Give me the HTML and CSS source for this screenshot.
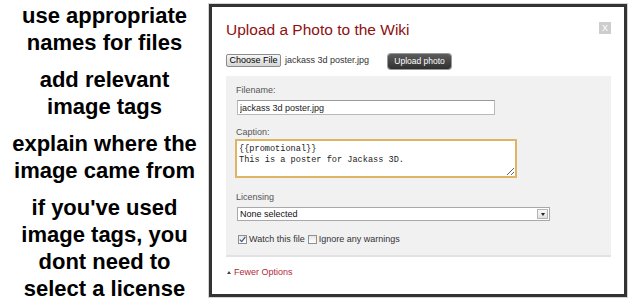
FILE: index.html
```html
<!DOCTYPE html>
<html lang="en">
<head>
    <meta charset="UTF-8">
    <meta name="viewport" content="width=device-width, initial-scale=1.0">
    <title>Upload a Photo to the Wiki</title>
    <link rel="stylesheet" href="styles.css">
</head>
<body>
    <div class="page">
        <div class="tips">
            <p>use appropriate<br>names for files</p>
            <p>add relevant<br>image tags</p>
            <p>explain where the<br>image came from</p>
            <p>if you've used<br>image tags, you<br>dont need to<br>select a license</p>
        </div>
        <div class="dialog">
            <div class="dialog-head">
                <h1 class="title">Upload a Photo to the Wiki</h1>
                <span class="close">X</span>
            </div>
            <div class="file-row">
                <span class="choose">Choose File</span>
                <span class="file-name">jackass 3d poster.jpg</span>
                <span class="upload">Upload photo</span>
            </div>
            <div class="options">
                <label class="label" for="filename">Filename:</label>
                <input class="text-input" id="filename" type="text" value="jackass 3d poster.jpg">
                <label class="label caption-label" for="caption">Caption:</label>
                <textarea class="caption" id="caption">{{promotional}}
This is a poster for Jackass 3D.</textarea>
                <div class="label licensing-label">Licensing</div>
                <div class="select">
                    <span class="select-text">None selected</span>
                    <span class="select-arrow"></span>
                </div>
                <div class="checks">
                    <span class="box checked">
                        <svg width="7" height="7" viewBox="0 0 7 7"><path d="M0.8 3.6 L2.7 5.6 L6.3 0.9" fill="none" stroke="#3b5a8a" stroke-width="1.3"/></svg>
                    </span>
                    <span class="check-text">Watch this file</span>
                    <span class="box"></span>
                    <span class="check-text">Ignore any warnings</span>
                </div>
            </div>
            <div class="fewer"><span class="arrow"></span>Fewer Options</div>
        </div>
    </div>
</body>
</html>
```

FILE: styles.css
```css
body {
    margin: 0;
    background: #fff;
    font-family: "Liberation Sans", Arial, sans-serif;
}
.page {
    display: flex;
    align-items: flex-start;
}
.tips {
    width: 209px;
    flex-shrink: 0;
    display: flex;
    flex-direction: column;
    gap: 10px;
    padding-top: 2px;
    text-align: center;
    font-weight: bold;
    font-size: 22px;
    line-height: 27px;
    color: #000;
}
.tips p {
    margin: 0;
}
.dialog {
    width: 418px;
    height: 293px;
    box-sizing: border-box;
    margin-top: 4px;
    border: 3px solid #333;
    box-shadow: 0 0 0 1px #d4d4d4;
    padding: 14px 13px 0 14px;
    flex-shrink: 0;
}
.dialog-head {
    display: flex;
    justify-content: space-between;
    align-items: flex-start;
}
.title {
    margin: 0;
    font-size: 15.5px;
    font-weight: normal;
    line-height: 18px;
    color: #8e1010;
}
.close {
    width: 12px;
    height: 12px;
    margin-top: 1px;
    background: #cdcdcd;
    color: #fff;
    font-size: 9px;
    line-height: 12px;
    text-align: center;
}
.file-row {
    display: flex;
    align-items: flex-start;
    margin-top: 15px;
    height: 15px;
}
.choose {
    width: 55px;
    height: 13px;
    box-sizing: border-box;
    border: 1px solid #8c8c8c;
    border-radius: 2px;
    background: linear-gradient(#f6f6f6, #d6d6d6);
    font-size: 9px;
    line-height: 11px;
    text-align: center;
    color: #000;
}
.file-name {
    margin-left: 4px;
    font-size: 9px;
    line-height: 13px;
    color: #333;
}
.upload {
    margin-left: 19px;
    width: 63px;
    height: 15px;
    border-radius: 3px;
    background: linear-gradient(#5c5c5c, #303030);
    box-shadow: 0 0 0 1px #999;
    color: #fff;
    font-size: 8.5px;
    line-height: 15px;
    text-align: center;
}
.options {
    margin-top: 7px;
    height: 181px;
    box-sizing: border-box;
    padding: 9px 10px 0;
    background: #f1f1f1;
    border-bottom: 2px solid #e2e2e2;
}
.label {
    display: block;
    font-size: 9px;
    line-height: 11px;
    color: #555;
}
.text-input {
    display: block;
    margin: 4px 0 0 1px;
    width: 258px;
    height: 15px;
    box-sizing: border-box;
    padding: 0 2px;
    border: 1px solid #b9b9b9;
    border-top-color: #999;
    background: #fff;
    font-family: "Liberation Sans", Arial, sans-serif;
    font-size: 9px;
    color: #222;
    outline: none;
}
.caption-label {
    margin-top: 12px;
}
.caption {
    display: block;
    margin: 1px 0 0 -1px;
    width: 282px;
    height: 39px;
    box-sizing: border-box;
    padding: 3px 2px;
    border: 2px solid #deb465;
    background: #fff;
    font-family: "Liberation Mono", "Courier New", monospace;
    font-size: 8.6px;
    line-height: 11px;
    color: #222;
    outline: none;
    resize: both;
}
.licensing-label {
    margin-top: 14px;
}
.select {
    margin: 4px 0 0 1px;
    width: 313px;
    height: 14px;
    box-sizing: border-box;
    border: 1px solid #a9a9a9;
    background: #fff;
    display: flex;
    align-items: center;
    justify-content: space-between;
    padding: 0 1px 0 2px;
}
.select-text {
    font-size: 9px;
    color: #111;
}
.select-arrow {
    width: 11px;
    height: 10px;
    box-sizing: border-box;
    border: 1px solid #b4b4b4;
    background: linear-gradient(#fafafa, #e0e0e0);
    display: flex;
    align-items: center;
    justify-content: center;
}
.select-arrow::after {
    content: "";
    border-left: 2.5px solid transparent;
    border-right: 2.5px solid transparent;
    border-top: 3px solid #222;
}
.checks {
    margin: 13px 0 0 2px;
    display: flex;
    align-items: center;
    height: 10px;
}
.box {
    width: 9px;
    height: 9px;
    box-sizing: border-box;
    border: 1px solid #8f8f8f;
    background: linear-gradient(#e6e6e6, #fff);
    display: flex;
    align-items: center;
    justify-content: center;
}
.check-text {
    margin: 0 3px 0 2px;
    font-size: 9px;
    color: #333;
}
.fewer {
    margin-top: 9px;
    display: flex;
    align-items: center;
    font-size: 9px;
    line-height: 12px;
    color: #b3283a;
}
.arrow {
    margin: 0 3px 0 1px;
    border-left: 2.5px solid transparent;
    border-right: 2.5px solid transparent;
    border-bottom: 3px solid #444;
}
```
